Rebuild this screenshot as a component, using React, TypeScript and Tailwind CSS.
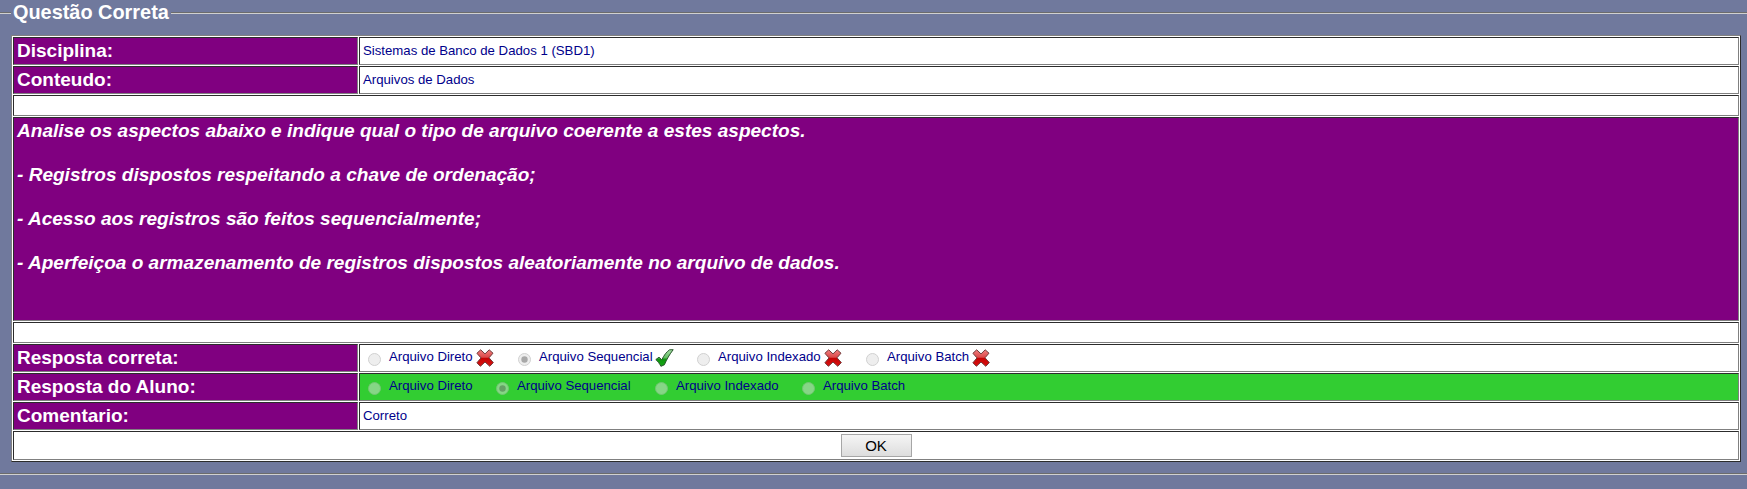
import React from "react";

const cell = "border border-t-[#2c2c2c] border-l-[#2c2c2c] border-r-[#808080] border-b-[#808080]";
const label = "bg-[#800080] text-white font-bold text-[19px] leading-[22px] w-[345px] shrink-0 px-[3px] pt-[2px] whitespace-nowrap";
const value = "text-[#00008b] text-[13.2px] leading-[15px] flex-1 px-[3px]";

function Row({ name, children, tone = "bg-white pb-[2px]" }: { name: string; children: React.ReactNode; tone?: string }) {
  return (
    <div className="flex h-[28px] gap-px">
      <div className={`${cell} ${label}`}>{name}</div>
      <div className={`${cell} ${value} flex items-center ${tone}`}>{children}</div>
    </div>
  );
}

function Radio({ checked, green }: { checked?: boolean; green?: boolean }) {
  return (
    <svg width="13" height="13" viewBox="0 0 13 13" className="mt-[4px] shrink-0">
      <circle cx="6.5" cy="6.5" r="6" fill={green ? "#86d686" : "#eeeeee"} stroke={green ? "#72c672" : "#d0d0d0"} />
      {checked && <circle cx="6.5" cy="6.5" r="3.2" fill={green ? "#669f66" : "#a8a8a8"} />}
    </svg>
  );
}

function Cross() {
  return (
    <svg width="18" height="18" viewBox="0 0 18 18" className="shrink-0">
      <defs>
        <linearGradient id="cross" x1="0" y1="0" x2="0" y2="1">
          <stop offset="0" stopColor="#f08080" />
          <stop offset=".45" stopColor="#dc4a4a" />
          <stop offset=".52" stopColor="#c40404" />
          <stop offset="1" stopColor="#dc1010" />
        </linearGradient>
      </defs>
      <path d="M4.7.8 9 4.9 13.2.8 17 4.2 13 8.8 17.3 13.6 13.8 17.3 9 13 4.4 17.3.9 13.8 5 8.9.9 4.3Z" fill="url(#cross)" stroke="#703a3a" strokeWidth="1" strokeLinejoin="round" />
    </svg>
  );
}

function Check() {
  return (
    <svg width="19" height="18" viewBox="0 0 19 18" className="shrink-0">
      <defs>
        <linearGradient id="check" x1="0" y1="0" x2="0" y2="1">
          <stop offset="0" stopColor="#a8dda8" />
          <stop offset=".5" stopColor="#5fbd5f" />
          <stop offset=".56" stopColor="#0d930d" />
          <stop offset="1" stopColor="#16a816" />
        </linearGradient>
      </defs>
      <path d="M.8 10.6 4 8.2 6.8 10.8C9 6.2 11.6 2.8 14.6.8L18.2.7C14.7 5.2 11.5 10.6 9.4 15.8L5.9 17.3C4.6 14.8 3 12.4.8 10.6Z" fill="url(#check)" stroke="#28562b" strokeWidth="1" strokeLinejoin="round" />
    </svg>
  );
}

const options = [
  { text: "Arquivo Direto", correct: false, a: "w-[150px]", b: "w-[128px]", t: "w-[85.5px]" },
  { text: "Arquivo Sequencial", correct: true, a: "w-[179px]", b: "w-[159px]", t: "w-[115px]" },
  { text: "Arquivo Indexado", correct: false, a: "w-[169px]", b: "w-[147px]", t: "w-[105px]" },
  { text: "Arquivo Batch", correct: false, a: "w-[150px]", b: "w-[128px]", t: "w-[84px]" },
];

function Options({ marked }: { marked?: boolean }) {
  return (
    <div className="flex pl-[5px] h-full pt-[4px]">
      {options.map((o) => (
        <div key={o.text} className={`flex items-start shrink-0 ${marked ? o.a : o.b}`}>
          <Radio checked={o.correct} green={!marked} />
          <span className={`ml-[8px] mr-px whitespace-nowrap shrink-0 ${o.t}`}>{o.text}</span>
          {marked && (o.correct ? <Check /> : <Cross />)}
        </div>
      ))}
    </div>
  );
}

export default function App() {
  return (
    <div className="h-[489px] w-full overflow-hidden bg-[#70799d] font-['Liberation_Sans',Arial,sans-serif]">
      <div className="flex h-[24px] items-start">
        <div className="mt-[12px] h-[2px] w-[11px] border-t border-t-[#6c6c6c] bg-[#d0d0d0]" />
        <h1 className="mx-[2px] mt-px text-[19.9px] leading-[22px] font-bold text-white whitespace-nowrap">Questão Correta</h1>
        <div className="mt-[12px] h-[2px] flex-1 border-t border-t-[#6c6c6c] bg-[#d0d0d0]" />
      </div>
      <div className="ml-[11px] mt-[11px] flex w-[1730px] flex-col gap-px border border-t-[#808080] border-l-[#808080] border-r-[#2c2c2c] border-b-[#2c2c2c] bg-white p-px">
        <Row name="Disciplina:">Sistemas de Banco de Dados 1 (SBD1)</Row>
        <Row name="Conteudo:">Arquivos de Dados</Row>
        <div className={`${cell} h-[21px]`} />
        <div className={`${cell} h-[204px] bg-[#800080] px-[3px] pt-[2px] text-[19.06px] font-bold italic leading-[22px] text-white`}>
          <p className="mb-[22px]">Analise os aspectos abaixo e indique qual o tipo de arquivo coerente a estes aspectos.</p>
          <p className="mb-[22px]">- Registros dispostos respeitando a chave de ordenação;</p>
          <p className="mb-[22px]">- Acesso aos registros são feitos sequencialmente;</p>
          <p>- Aperfeiçoa o armazenamento de registros dispostos aleatoriamente no arquivo de dados.</p>
        </div>
        <div className={`${cell} h-[21px]`} />
        <Row name="Resposta correta:" tone="bg-white"><Options marked /></Row>
        <Row name="Resposta do Aluno:" tone="bg-[#32cd32]"><Options /></Row>
        <Row name="Comentario:">Correto</Row>
        <div className={`${cell} flex h-[29px] justify-center pt-[2px]`}>
          <button className="h-[23px] w-[71px] border border-[#a6a6a6] bg-linear-to-b from-[#f5f5f5] to-[#dddddd] text-[15px] leading-[21px] text-black">OK</button>
        </div>
      </div>
      <div className="mt-[11px] h-[2px] border-t border-t-[#6c6c6c] bg-[#d0d0d0]" />
    </div>
  );
}
